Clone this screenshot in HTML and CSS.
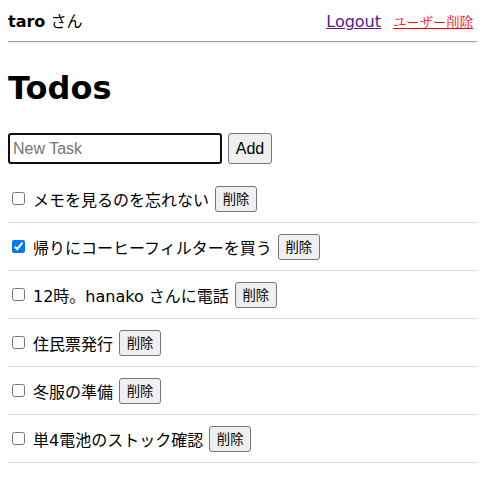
FILE: index.html
```html
<!DOCTYPE html>
<html lang="ja">
<head>
<meta charset="utf-8">
<title>Todos</title>
<link rel="stylesheet" href="styles.css">
</head>
<body>
<header class="topbar">
  <div class="user"><b>taro</b> さん</div>
  <nav class="actions">
    <a class="logout" href="#">Logout</a>
    <button class="delete-user" type="button">ユーザー削除</button>
  </nav>
</header>
<hr class="divider">
<h1 class="title">Todos</h1>
<form class="new-task">
  <input class="task-input" type="text" placeholder="New Task">
  <button class="add-btn" type="button">Add</button>
</form>
<ul class="todo-list">
  <li class="todo"><input class="check" type="checkbox"><span class="label">メモを見るのを忘れない</span><button class="del" type="button">削除</button></li>
  <li class="todo"><input class="check" type="checkbox" checked><span class="label">帰りにコーヒーフィルターを買う</span><button class="del" type="button">削除</button></li>
  <li class="todo"><input class="check" type="checkbox"><span class="label">12時。hanako さんに電話</span><button class="del" type="button">削除</button></li>
  <li class="todo"><input class="check" type="checkbox"><span class="label">住民票発行</span><button class="del" type="button">削除</button></li>
  <li class="todo"><input class="check" type="checkbox"><span class="label">冬服の準備</span><button class="del" type="button">削除</button></li>
  <li class="todo"><input class="check" type="checkbox"><span class="label">単4電池のストック確認</span><button class="del" type="button">削除</button></li>
</ul>
</body>
</html>
```

FILE: styles.css
```css
html, body {
  background: #fff;
}
body {
  margin: 8px;
  font-family: "DejaVu Sans", "Noto Sans CJK JP", sans-serif;
  font-size: 16px;
  color: #000;
}
.topbar {
  display: flex;
  justify-content: space-between;
  align-items: baseline;
  padding-right: 4px;
}
.user b {
  font-weight: bold;
}
.actions {
  display: flex;
  align-items: baseline;
  gap: 12px;
}
.logout {
  color: #551a8b;
  font-size: 16px;
  text-decoration: underline;
}
.delete-user {
  background: none;
  border: none;
  padding: 0;
  color: #ff0000;
  font-family: "Noto Serif CJK JP", "IPAMincho", serif;
  font-size: 13.33px;
  text-decoration: underline;
  cursor: pointer;
}
.divider {
  margin: 9px 0 0;
  height: 0;
  border-style: solid;
  border-width: 1px 0;
  border-top-color: #a0a0a0;
  border-bottom-color: #eeeeee;
}
.title {
  font-size: 32px;
  font-weight: bold;
  margin: 22px 0 0;
  line-height: 46px;
}
.new-task {
  display: flex;
  gap: 6px;
  align-items: stretch;
  margin-top: 22px;
}
.task-input {
  width: 214px;
  height: 31px;
  box-sizing: border-box;
  border: 2px solid #101010;
  border-radius: 3px;
  padding: 1px 3px;
  font-family: "Liberation Sans", Arial, sans-serif;
  font-size: 16px;
  outline: none;
}
.task-input::placeholder {
  color: #757575;
}
.add-btn {
  width: 44px;
  height: 31px;
  font-family: "Liberation Sans", Arial, sans-serif;
  font-size: 16px;
  background: #efefef;
  border: 1px solid #767676;
  border-radius: 3px;
  color: #000;
  padding: 0;
}
.todo-list {
  list-style: none;
  margin: 11px 0 0;
  padding: 0;
}
.todo {
  display: flex;
  align-items: center;
  height: 48px;
  box-sizing: border-box;
  border-bottom: 1px solid #ddd;
}
.check {
  width: 13px;
  height: 13px;
  margin: 0 8px 0 4px;
}
.label {
  font-size: 16px;
}
.del {
  margin-left: 6px;
  width: 42px;
  height: 26px;
  padding: 0;
  font-family: "Noto Sans CJK JP", sans-serif;
  font-size: 13.33px;
  background: #efefef;
  border: 1px solid #767676;
  border-radius: 3px;
  color: #000;
}
```
